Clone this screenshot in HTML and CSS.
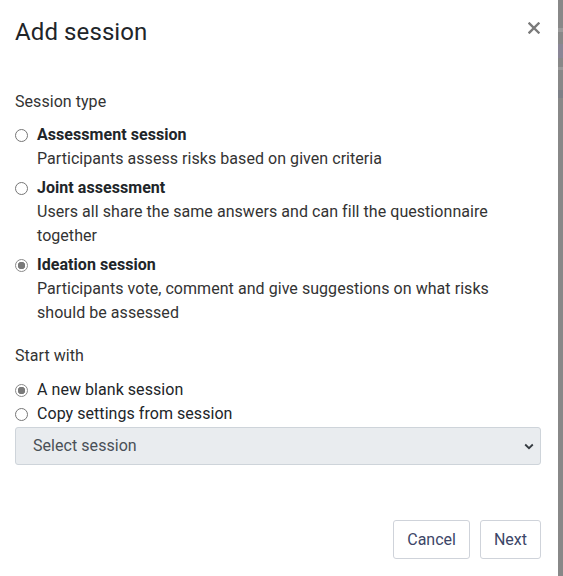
FILE: index.html
```html
<!DOCTYPE html>
<html>
<head>
<meta charset="utf-8">
<link rel="stylesheet" href="styles.css">
</head>
<body>
<div class="page">
  <div class="modal">
    <div class="modal-header">
      <h1 class="modal-title">Add session</h1>
      <button class="close" aria-label="Close">
        <svg width="12" height="12" viewBox="0 0 12 12"><path d="M1.5 1.5 L10.5 10.5 M10.5 1.5 L1.5 10.5" stroke="#7a7a7a" stroke-width="2.4" stroke-linecap="square"/></svg>
      </button>
    </div>
    <div class="modal-body">
      <div class="group-label">Session type</div>
      <label class="option">
        <input type="radio" name="type" class="radio">
        <span class="option-text"><b>Assessment session</b><span class="desc">Participants assess risks based on given criteria</span></span>
      </label>
      <label class="option">
        <input type="radio" name="type" class="radio">
        <span class="option-text"><b>Joint assessment</b><span class="desc">Users all share the same answers and can fill the questionnaire together</span></span>
      </label>
      <label class="option">
        <input type="radio" name="type" class="radio" checked>
        <span class="option-text"><b>Ideation session</b><span class="desc">Participants vote, comment and give suggestions on what risks should be assessed</span></span>
      </label>

      <div class="group-label start">Start with</div>
      <label class="option simple">
        <input type="radio" name="start" class="radio" checked>
        <span class="option-text">A new blank session</span>
      </label>
      <label class="option simple">
        <input type="radio" name="start" class="radio">
        <span class="option-text">Copy settings from session</span>
      </label>
      <div class="select">
        <span>Select session</span>
        <svg width="10" height="7" viewBox="0 0 10 7"><path d="M1.2 1.5 L5 5.2 L8.8 1.5" fill="none" stroke="#343a40" stroke-width="1.8"/></svg>
      </div>
    </div>
    <div class="modal-footer">
      <button class="btn">Cancel</button>
      <button class="btn">Next</button>
    </div>
  </div>
  <div class="backdrop">
    <div class="bd-band b1"></div>
    <div class="bd-band b2"></div>
    <div class="bd-band b3"></div>
    <div class="bd-band b4"></div>
  </div>
</div>
</body>
</html>
```

FILE: styles.css
```css
html, body {
  margin: 0;
  padding: 0;
}
body {
  font-family: Roboto, "Liberation Sans", sans-serif;
  color: #212529;
  font-size: 16px;
  line-height: 24px;
  background: #888;
}
.page {
  display: flex;
  height: 576px;
  overflow: hidden;
}
.modal {
  width: 558px;
  flex: none;
  background: #fff;
  display: flex;
  flex-direction: column;
}
.modal-header {
  display: flex;
  justify-content: space-between;
  align-items: flex-start;
  padding: 17px 17px 16px 15px;
}
.modal-title {
  margin: 0;
  font-size: 24px;
  line-height: 30px;
  font-weight: 400;
  color: #212529;
  letter-spacing: 0.1px;
}
.close {
  border: 0;
  background: none;
  padding: 0;
  margin: 4px 0 0 0;
  width: 14px;
  height: 14px;
  display: flex;
  align-items: center;
  justify-content: center;
}
.modal-body {
  padding: 27px 17px 0 15px;
  letter-spacing: 0.05px;
}
.group-label {
  color: #333;
  margin-bottom: 9px;
}
.group-label.start {
  margin-top: 19px;
  margin-bottom: 10px;
}
.option {
  display: flex;
  align-items: flex-start;
  margin-bottom: 5px;
  padding-right: 12px;
}
.option.simple {
  margin-bottom: 0;
}
.radio {
  appearance: none;
  -webkit-appearance: none;
  width: 13px;
  height: 13px;
  border: 1px solid #767676;
  border-radius: 50%;
  margin: 6px 9px 0 0;
  flex: none;
  box-sizing: border-box;
  background: #fff;
}
.radio:checked {
  background: radial-gradient(circle, #7a7a7a 0 3.5px, #fff 4px);
  border-color: #8a8a8a;
}
.option-text {
  display: flex;
  flex-direction: column;
  color: #212529;
}
.option-text b {
  font-weight: 700;
  color: #212529;
}
.desc {
  color: #333;
}
.select {
  margin-top: 1px;
  height: 38px;
  box-sizing: border-box;
  background: #e9ecef;
  border: 1px solid #ced4da;
  border-radius: 3px;
  display: flex;
  align-items: center;
  justify-content: space-between;
  padding: 0 6px 0 17px;
  color: #495057;
}
.modal-footer {
  display: flex;
  justify-content: flex-end;
  gap: 10px;
  padding: 55px 17px 0 0;
}
.btn {
  font-family: Roboto, "Liberation Sans", sans-serif;
  font-size: 16px;
  height: 39px;
  padding: 0 13px;
  background: #fff;
  border: 1px solid #cfd3da;
  border-radius: 3px;
  color: #3c4668;
}
.backdrop {
  flex: 1;
  background: #888;
  display: flex;
  flex-direction: column;
}
.bd-band {
  width: 100%;
}
.b1 { margin-top: 28px; height: 4px; background: #9a9a9a; }
.b2 { margin-top: 12px; height: 14px; background: #8a8696; }
.b3 { margin-top: 9px; height: 3px; background: #9a9a9a; }
.b4 { margin-top: 20px; height: 8px; background: #7d8087; }
```
